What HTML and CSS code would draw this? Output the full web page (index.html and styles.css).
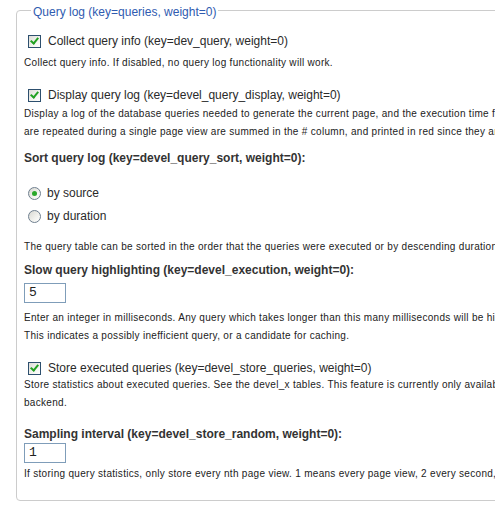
FILE: index.html
```html
<!DOCTYPE html>
<html lang="en">
<head>
    <meta charset="UTF-8">
    <meta name="viewport" content="width=device-width, initial-scale=1.0">
    <title>Devel settings - Query log</title>
    <link rel="stylesheet" href="styles.css">
</head>
<body>
    <fieldset class="settings">
        <legend>Query log (key=queries, weight=0)</legend>

        <div class="form-item first">
            <label class="option">
                <span class="checkbox checked"></span>
                Collect query info (key=dev_query, weight=0)
            </label>
            <div class="description lower">Collect query info. If disabled, no query log functionality will work.</div>
        </div>

        <div class="form-item">
            <label class="option">
                <span class="checkbox checked"></span>
                Display query log (key=devel_query_display, weight=0)
            </label>
            <div class="description">Display a log of the database queries needed to generate the current page, and the execution time for each. Also, queries which<br>are repeated during a single page view are summed in the # column, and printed in red since they are candidates for caching.</div>
        </div>

        <div class="form-item heading-item">
            <label class="title">Sort query log (key=devel_query_sort, weight=0):</label>
            <div class="form-radios">
                <label class="option radio-row">
                    <span class="radio checked"></span>
                    by source
                </label>
                <label class="option radio-row">
                    <span class="radio"></span>
                    by duration
                </label>
            </div>
            <div class="description after-radios">The query table can be sorted in the order that the queries were executed or by descending duration.</div>
        </div>

        <div class="form-item tight">
            <label class="title">Slow query highlighting (key=devel_execution, weight=0):</label>
            <div class="textfield">5</div>
            <div class="description after-field">Enter an integer in milliseconds. Any query which takes longer than this many milliseconds will be highlighted in the query log.<br>This indicates a possibly inefficient query, or a candidate for caching.</div>
        </div>

        <div class="form-item">
            <label class="option">
                <span class="checkbox checked"></span>
                Store executed queries (key=devel_store_queries, weight=0)
            </label>
            <div class="description flush">Store statistics about executed queries. See the devel_x tables. This feature is currently only available for the MySQL database<br>backend.</div>
        </div>

        <div class="form-item last">
            <label class="title">Sampling interval (key=devel_store_random, weight=0):</label>
            <div class="textfield near">1</div>
            <div class="description after-field-small">If storing query statistics, only store every nth page view. 1 means every page view, 2 every second, and so on.</div>
        </div>
    </fieldset>
</body>
</html>
```

FILE: styles.css
```css
html, body {
    overflow: hidden;
}
body {
    margin: 0;
    font-family: "Liberation Sans", Arial, sans-serif;
    color: #222;
    background: #fff;
}
.settings {
    width: 760px;
    margin: 1px 0 0 16px;
    padding: 0 7px 17px 7px;
    border: 1px solid #cccccc;
    border-radius: 4px;
}
.settings legend {
    margin-left: 7px;
    padding: 4px 2px 0 2px;
    font-size: 12px;
    line-height: 14px;
    color: #2f5bb0;
}
.form-item {
    margin-top: 15px;
}
.form-item.first {
    margin-top: 14px;
}
.form-item.heading-item {
    margin-top: 9px;
}
.form-item.tight {
    margin-top: 6px;
}
.form-item.last {
    margin-top: 14px;
}
label {
    display: block;
    font-size: 12px;
    line-height: 16px;
    white-space: nowrap;
}
label.title {
    font-weight: bold;
    color: #333;
}
label.option {
    display: flex;
    align-items: center;
    padding-left: 4px;
    color: #2a2a2a;
}
.checkbox {
    position: relative;
    width: 11px;
    height: 11px;
    margin-right: 7px;
    border: 1px solid #2d4f6e;
    background: linear-gradient(135deg, #dcdcd6 0%, #f4f4f0 60%, #ffffff 100%);
}
.checkbox.checked::after {
    content: "";
    position: absolute;
    left: 3px;
    top: 0px;
    width: 3px;
    height: 6px;
    border: solid #21a121;
    border-width: 0 2px 2px 0;
    transform: rotate(40deg);
}
.form-radios {
    margin-top: 19px;
}
.radio-row + .radio-row {
    margin-top: 7px;
}
.radio {
    position: relative;
    box-sizing: border-box;
    width: 13px;
    height: 13px;
    margin-right: 6px;
    border: 1px solid #6f7f8f;
    border-radius: 50%;
    background: linear-gradient(135deg, #d8d8d2 0%, #f2f2ee 60%, #ffffff 100%);
}
.radio.checked::after {
    content: "";
    position: absolute;
    left: 3px;
    top: 3px;
    width: 5px;
    height: 5px;
    border-radius: 50%;
    background: #2aa82a;
}
.description {
    margin-top: 2px;
    font-size: 10px;
    line-height: 18px;
    letter-spacing: 0.3px;
    color: #222;
    white-space: nowrap;
}
.description.lower {
    margin-top: 5px;
}
.description.flush {
    margin-top: 0;
}
.description.after-radios {
    margin-top: 14px;
}
.description.after-field {
    margin-top: 6px;
}
.description.after-field-small {
    margin-top: 2px;
}
.textfield {
    box-sizing: border-box;
    width: 42px;
    height: 20px;
    margin-top: 5px;
    padding: 0 4px;
    border: 1px solid #7f9db9;
    font-family: "Liberation Mono", "Courier New", monospace;
    font-size: 13px;
    line-height: 18px;
    color: #222;
}
.textfield.near {
    margin-top: 1px;
}
```
